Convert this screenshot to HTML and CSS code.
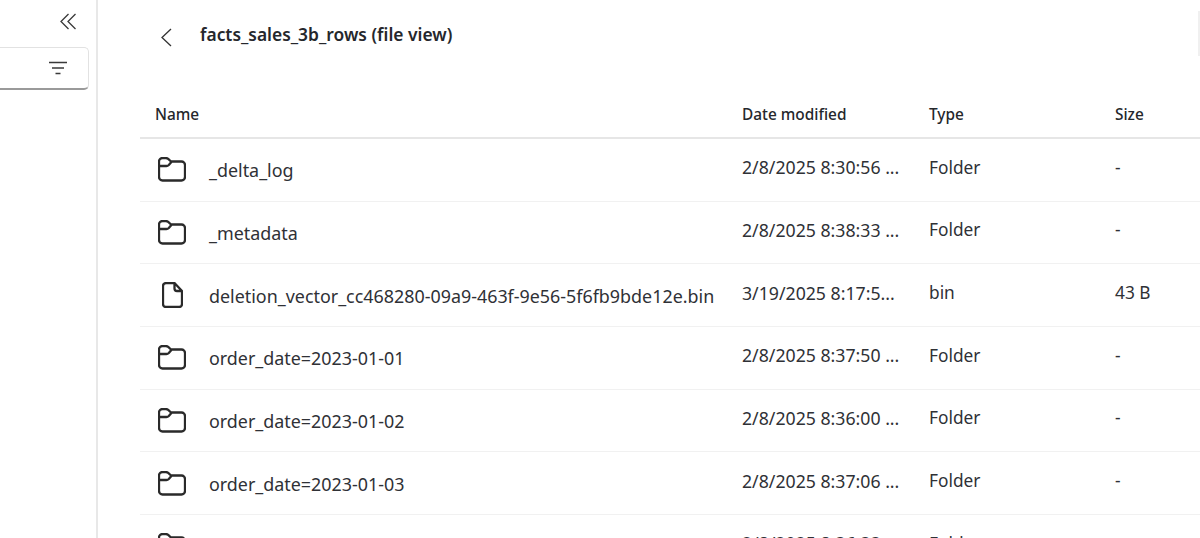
FILE: index.html
```html
<!DOCTYPE html>
<html lang="en">
<head>
<meta charset="utf-8">
<title>facts_sales_3b_rows (file view)</title>
<link rel="stylesheet" href="styles.css">
</head>
<body>
<svg class="defs" width="0" height="0" aria-hidden="true">
  <symbol id="folder" viewBox="0 0 28 25">
    <path d="M1 4.500a3.500 3.500 0 0 1 3.500-3.500h3.400a3.500 3.500 0 0 1 2.300.9l2.800 2.600h10.500a3.500 3.500 0 0 1 3.500 3.500v12a3.500 3.500 0 0 1-3.500 3.500h-19a3.500 3.500 0 0 1-3.500-3.500z M1 9h7.400a3.500 3.500 0 0 0 2.400-1l2.800-3.300" fill="none" stroke="currentColor" stroke-width="2.300" stroke-linejoin="round" stroke-linecap="round"/>
  </symbol>
  <symbol id="file" viewBox="0 0 21 26">
    <path d="M4 1h8.500l7.500 8v13a3 3 0 0 1-3 3h-13a3 3 0 0 1-3-3v-18a3 3 0 0 1 3-3zM12.500 1v5.500a2.500 2.500 0 0 0 2.500 2.500h5" fill="none" stroke="currentColor" stroke-width="2.300" stroke-linejoin="round"/>
  </symbol>
</svg>
<div class="app">
  <aside class="sidebar">
    <div class="collapse-row">
      <svg class="collapse" width="16" height="18" viewBox="0 0 16 18"><path d="M8.500 1 1 8.500 8.500 16M15.500 1 8 8.500 15.500 16" fill="none" stroke="currentColor" stroke-width="1.300"/></svg>
    </div>
    <div class="filter-box">
      <svg class="filter" width="20" height="14" viewBox="0 0 20 14"><path d="M1 1.500h18M4 7h12M7.500 12.500h5" fill="none" stroke="currentColor" stroke-width="1.400"/></svg>
    </div>
  </aside>
  <main class="content">
    <header class="title-bar">
      <svg class="back" width="12" height="19" viewBox="0 0 12 19"><path d="M11 1 2 9.500l9 8.500" fill="none" stroke="currentColor" stroke-width="1.300"/></svg>
      <h1 class="title">facts_sales_3b_rows (file view)</h1>
      <span class="edge"></span>
    </header>
    <div class="table">
      <div class="row head">
        <div class="cell name">Name</div>
        <div class="cell">Date modified</div>
        <div class="cell">Type</div>
        <div class="cell size">Size</div>
      </div>
      <div class="row">
        <div class="cell name lower"><svg class="icon"><use href="#folder"/></svg><span class="label">_delta_log</span></div>
        <div class="cell date">2/8/2025 8:30:56 ...</div><div class="cell">Folder</div><div class="cell size">-</div>
      </div>
      <div class="row">
        <div class="cell name lower"><svg class="icon"><use href="#folder"/></svg><span class="label">_metadata</span></div>
        <div class="cell date">2/8/2025 8:38:33 ...</div><div class="cell">Folder</div><div class="cell size">-</div>
      </div>
      <div class="row">
        <div class="cell name lower"><svg class="icon file-icon"><use href="#file"/></svg><span class="label">deletion_vector_cc468280-09a9-463f-9e56-5f6fb9bde12e.bin</span></div>
        <div class="cell date">3/19/2025 8:17:5...</div><div class="cell">bin</div><div class="cell size">43 B</div>
      </div>
      <div class="row">
        <div class="cell name lower"><svg class="icon"><use href="#folder"/></svg><span class="label">order_date=2023-01-01</span></div>
        <div class="cell date">2/8/2025 8:37:50 ...</div><div class="cell">Folder</div><div class="cell size">-</div>
      </div>
      <div class="row">
        <div class="cell name lower"><svg class="icon"><use href="#folder"/></svg><span class="label">order_date=2023-01-02</span></div>
        <div class="cell date">2/8/2025 8:36:00 ...</div><div class="cell">Folder</div><div class="cell size">-</div>
      </div>
      <div class="row">
        <div class="cell name lower"><svg class="icon"><use href="#folder"/></svg><span class="label">order_date=2023-01-03</span></div>
        <div class="cell date">2/8/2025 8:37:06 ...</div><div class="cell">Folder</div><div class="cell size">-</div>
      </div>
      <div class="row">
        <div class="cell name lower"><svg class="icon"><use href="#folder"/></svg><span class="label">order_date=2023-01-04</span></div>
        <div class="cell date">2/8/2025 8:36:33 ...</div><div class="cell">Folder</div><div class="cell size">-</div>
      </div>
    </div>
  </main>
</div>
</body>
</html>
```
FILE: styles.css
```css
* { box-sizing: border-box; }
html, body { margin: 0; height: 538px; overflow: hidden; background: #fff; }
body { font-family: "Noto Sans", "Open Sans", sans-serif; color: #2b2d33; }
.defs { display: block; height: 0; }
.app { display: flex; height: 538px; overflow: hidden; }

.sidebar { width: 98px; flex: none; border-right: 2px solid #e8e8e8; padding-top: 13px; }
.collapse-row { display: flex; justify-content: flex-end; padding-right: 20px; height: 34px; }
.collapse { color: #3a3a3a; }
.filter-box { width: 90px; margin-left: -1px; height: 43px; display: flex; align-items: center; justify-content: flex-end; padding-right: 20px; border: 1px solid #e2e2e2; border-bottom: 2px solid #9a9a9a; border-left: 0; border-radius: 0 5px 5px 0; }
.filter { color: #3a3a3a; }

.content { flex: 1; min-width: 0; padding-left: 42px; }
.title-bar { height: 97px; display: flex; align-items: flex-start; padding: 11px 0 0 20px; }
.back { color: #333; margin-top: 17px; flex: none; }
.title { margin: 11px 0 0 28px; font-size: 17.400px; line-height: 24px; font-weight: 600; color: #25272c; flex: 1; }
.edge { width: 2px; height: 45px; background: #f0f0f0; flex: none; }

.row { display: grid; grid-template-columns: 602px 187px 186px 1fr; height: 62.67px; border-bottom: 1px solid #f1f1f1; align-items: center; font-size: 17.300px; padding-bottom: 5px; color: #2f3136; }
.row.head { height: 42px; padding-bottom: 12px; border-bottom: 2px solid #e6e6e6; font-size: 15.400px; font-weight: 500; color: #25272c; align-items: end; }
.cell { white-space: nowrap; }
.date { font-size: 17.700px; }
.name { padding-left: 15px; }
.lower { display: flex; align-items: center; position: relative; top: 3px; }
.icon { width: 28px; height: 25px; color: #2a2a2a; flex: none; margin-left: 3px; margin-top: -1px; }
.file-icon { width: 21px; height: 26px; margin-left: 7px; margin-right: 3px; }
.label { margin-left: 23px; font-size: 17.900px; line-height: 24px; }
```
